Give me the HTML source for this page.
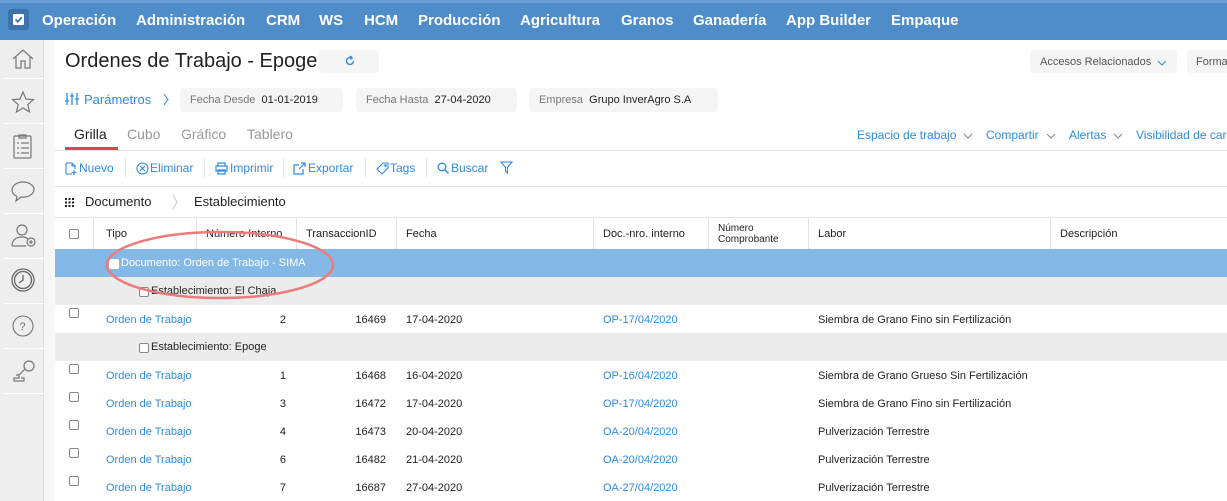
<!DOCTYPE html>
<html><head><meta charset="utf-8"><style>
*{margin:0;padding:0;box-sizing:border-box}
body{width:1227px;height:501px;overflow:hidden;background:#fff;font-family:"Liberation Sans",Arial,sans-serif;position:relative;color:#222}
.abs{position:absolute;white-space:nowrap}
#top{position:absolute;left:0;top:0;width:1227px;height:40px;background:#4f8cca;border-top:3px solid #6a9fd6}
#top .m{position:absolute;top:9px;color:#fff;font-weight:bold;font-size:15px}
#side{position:absolute;left:0;top:40px;width:44px;height:461px;background:#eeeeee;border-right:1px solid #ddd}
#shadow{position:absolute;left:44px;top:40px;width:11px;height:461px;background:linear-gradient(90deg,#f3f3f3,#fafafa)}
.sep{position:absolute;left:4px;width:40px;height:1px;background:#fff}
.t{font-size:11px}
.blue{color:#2f8ae0}
.hl{position:absolute;height:1px;background:#e2e2e2}
.cb{position:absolute;width:10px;height:10px;border:1px solid #888;border-radius:2px;background:#fff}
.col{position:absolute;top:218px;height:31px;width:1px;background:#e3e3e3}
.tb{position:absolute;top:161px;font-size:12px;color:#2f8ae0}
.vs{position:absolute;top:158px;width:1px;height:19px;background:#e2e2e2}
.tb svg{position:absolute;top:1px;left:0}
</style></head><body>
<div id="top">
<div class="abs" style="left:8px;top:6px;width:21px;height:21px;background:#3d72ad;border-radius:3px"></div>
<div class="abs" style="left:13px;top:11px;width:11px;height:11px;background:#fff;border-radius:1px"></div>
<svg class="abs" style="left:13px;top:11px" width="11" height="11"><path d="M2.5 5.5l2.3 2.3L8.8 3.2" stroke="#3d72ad" stroke-width="1.8" fill="none"/></svg>
<span class="m" style="left:42px">Operación</span>
<span class="m" style="left:136px">Administración</span>
<span class="m" style="left:266px">CRM</span>
<span class="m" style="left:319px">WS</span>
<span class="m" style="left:364px">HCM</span>
<span class="m" style="left:418px">Producción</span>
<span class="m" style="left:520px">Agricultura</span>
<span class="m" style="left:621px">Granos</span>
<span class="m" style="left:693px">Ganadería</span>
<span class="m" style="left:786px">App Builder</span>
<span class="m" style="left:891px">Empaque</span>
</div>
<div id="side">
<div class="sep" style="top:38px"></div><div class="sep" style="top:83px"></div><div class="sep" style="top:128px"></div><div class="sep" style="top:173px"></div><div class="sep" style="top:218px"></div><div class="sep" style="top:263px"></div><div class="sep" style="top:308px"></div><div class="sep" style="top:353px"></div>
<svg class="abs" style="left:10px;top:6px" width="26" height="26" fill="none" stroke="#777" stroke-width="1.2"><path d="M3 13L13 4l10 9M6 11v11h5v-7h4v7h5V11"/></svg>
<svg class="abs" style="left:10px;top:49px" width="26" height="26" fill="none" stroke="#777" stroke-width="1.2"><path d="M13 3l3 7 7.5.6-5.7 5 1.8 7.4L13 19l-6.6 4 1.8-7.4-5.7-5L10 10z"/></svg>
<svg class="abs" style="left:12px;top:93px" width="22" height="28" fill="none" stroke="#777" stroke-width="1.2"><rect x="2" y="3" width="17" height="22" rx="1"/><path d="M7 2h7v3H7zM5 10h2M9 10h8M5 15h2M9 15h8M5 20h2M9 20h8"/></svg>
<svg class="abs" style="left:10px;top:138px" width="26" height="26" fill="none" stroke="#777" stroke-width="1.2"><path d="M13 4C7 4 2 7.5 2 12c0 3 2 5 5 6.5L6 23l5-4c.7.1 1.3.1 2 .1 6 0 11-3.5 11-7.6S19 4 13 4z"/></svg>
<svg class="abs" style="left:10px;top:182px" width="28" height="28" fill="none" stroke="#777" stroke-width="1.2"><circle cx="12" cy="8" r="5"/><path d="M2 24c0-6 4-9 10-9 3 0 5 1 6 2M2 24h14"/><circle cx="21" cy="20" r="4"/><path d="M21 18v4M19 20h4"/></svg>
<svg class="abs" style="left:10px;top:227px" width="26" height="26" fill="none" stroke="#666" stroke-width="1.3"><circle cx="13" cy="13" r="11"/><circle cx="13" cy="13" r="8.5"/><path d="M13 8v5l-4 3"/></svg>
<svg class="abs" style="left:11px;top:274px" width="24" height="24" fill="none" stroke="#777" stroke-width="1.1"><circle cx="12" cy="12" r="10"/><text x="8.5" y="16" font-size="11" fill="#777" stroke="none" font-family="Liberation Sans">?</text></svg>
<svg class="abs" style="left:10px;top:318px" width="28" height="26" fill="none" stroke="#777" stroke-width="1.2"><circle cx="19" cy="8" r="5"/><path d="M15 11l-6 6v3H4v3h10v-3h-3M9 17h-3"/></svg>
</div>
<div id="shadow"></div>

<div class="abs" style="left:65px;top:50px;font-size:20px;color:#222">Ordenes de Trabajo - Epoge</div>
<div class="abs" style="left:319px;top:50px;width:60px;height:23px;background:#f5f5f5;border-radius:4px"></div>
<svg class="abs" style="left:344px;top:55px" width="12" height="12" fill="none" stroke="#2f8ae0" stroke-width="1.4"><path d="M9.5 6A3.5 3.5 0 1 1 7 2.6"/><path d="M6 1l2 1.6-1.6 2" /></svg>
<div class="abs" style="left:1030px;top:50px;width:147px;height:23px;background:#f5f5f5;border-radius:4px"></div>
<div class="abs t" style="left:1040px;top:56px;color:#555">Accesos Relacionados</div>
<svg class="abs" style="left:1157px;top:60px" width="10" height="6" fill="none" stroke="#2f8ae0"><path d="M1 1l4 4 4-4"/></svg>
<div class="abs" style="left:1187px;top:50px;width:50px;height:23px;background:#f5f5f5;border-radius:4px"></div>
<div class="abs t" style="left:1196px;top:56px;color:#555">Forma</div>

<svg class="abs" style="left:65px;top:92px" width="14" height="14" stroke="#2f8ae0" stroke-width="1.3"><path d="M2 1v12M7 1v12M12 1v12M0 9h4M5 4h4M10 7h4"/></svg>
<div class="abs" style="left:84px;top:92px;font-size:13px;color:#2f8ae0">Parámetros</div>
<svg class="abs" style="left:163px;top:93px" width="6" height="13" fill="none" stroke="#2f8ae0"><path d="M1 1l4 5.5L1 12"/></svg>
<div class="abs" style="left:180px;top:88px;width:163px;height:24px;background:#f5f5f5;border-radius:4px"></div>
<div class="abs" style="left:190px;top:94px;font-size:11px"><span style="color:#777">Fecha Desde</span>&nbsp; 01-01-2019</div>
<div class="abs" style="left:356px;top:88px;width:161px;height:24px;background:#f5f5f5;border-radius:4px"></div>
<div class="abs" style="left:366px;top:94px;font-size:11px"><span style="color:#777">Fecha Hasta</span>&nbsp; 27-04-2020</div>
<div class="abs" style="left:529px;top:88px;width:189px;height:24px;background:#f5f5f5;border-radius:4px"></div>
<div class="abs" style="left:539px;top:94px;font-size:11px"><span style="color:#777">Empresa</span>&nbsp; Grupo InverAgro S.A</div>

<div class="abs" style="left:74px;top:126px;font-size:14px;color:#222">Grilla</div>
<div class="abs" style="left:127px;top:126px;font-size:14px;color:#999">Cubo</div>
<div class="abs" style="left:181px;top:126px;font-size:14px;color:#999">Gráfico</div>
<div class="abs" style="left:247px;top:126px;font-size:14px;color:#999">Tablero</div>
<div class="abs" style="left:65px;top:147px;width:53px;height:3px;background:#e0493a"></div>
<div class="hl" style="left:55px;top:150px;width:1172px"></div>
<div class="abs" style="left:857px;top:128px;font-size:12px;color:#2f8ae0">Espacio de trabajo</div>
<svg class="abs" style="left:963px;top:133px" width="10" height="6" fill="none" stroke="#888"><path d="M1 1l4 4 4-4"/></svg>
<div class="abs" style="left:986px;top:128px;font-size:12px;color:#2f8ae0">Compartir</div>
<svg class="abs" style="left:1046px;top:133px" width="10" height="6" fill="none" stroke="#888"><path d="M1 1l4 4 4-4"/></svg>
<div class="abs" style="left:1069px;top:128px;font-size:12px;color:#2f8ae0">Alertas</div>
<svg class="abs" style="left:1113px;top:133px" width="10" height="6" fill="none" stroke="#888"><path d="M1 1l4 4 4-4"/></svg>
<div class="abs" style="left:1136px;top:128px;font-size:12px;color:#2f8ae0">Visibilidad de car</div>

<div class="tb" style="left:65px;padding-left:14px"><svg width="12" height="13" fill="none" stroke="#2f8ae0" stroke-width="1.1"><path d="M1 1h6l3 3v3M1 1v11h6M7 1v3h3M9 8v5M6.5 10.5h5"/></svg>Nuevo</div>
<div class="vs" style="left:125px"></div>
<div class="tb" style="left:136px;padding-left:14px"><svg width="13" height="13" fill="none" stroke="#2f8ae0" stroke-width="1.1"><circle cx="6.5" cy="6.5" r="5.5"/><path d="M4 4l5 5M9 4l-5 5"/></svg>Eliminar</div>
<div class="vs" style="left:204px"></div>
<div class="tb" style="left:215px;padding-left:15px"><svg width="13" height="13" fill="none" stroke="#2f8ae0" stroke-width="1.2"><path d="M3 4V1h7v3M1 4h11v5H1zM3 8h7v4H3z"/></svg>Imprimir</div>
<div class="vs" style="left:283px"></div>
<div class="tb" style="left:293px;padding-left:15px"><svg width="13" height="13" fill="none" stroke="#2f8ae0" stroke-width="1.2"><path d="M10 7v5H1V3h5M8 1h4v4M12 1L6 7"/></svg>Exportar</div>
<div class="vs" style="left:365px"></div>
<div class="tb" style="left:376px;padding-left:14px"><svg width="13" height="13" fill="none" stroke="#2f8ae0" stroke-width="1.1"><path d="M7 1h5v5L6 12 1 7z"/><circle cx="9.5" cy="3.5" r=".8"/></svg>Tags</div>
<div class="vs" style="left:426px"></div>
<div class="tb" style="left:437px;padding-left:14px"><svg width="12" height="13" fill="none" stroke="#2f8ae0" stroke-width="1.3"><circle cx="5" cy="5" r="3.8"/><path d="M8 8l3.5 3.5"/></svg>Buscar</div>
<svg class="abs" style="left:500px;top:161px" width="13" height="13" fill="none" stroke="#2f8ae0" stroke-width="1.1"><path d="M1 1h11L7.5 6.5V12L5.5 10.5v-4z"/></svg>
<div class="hl" style="left:55px;top:186px;width:1172px"></div>
<svg class="abs" style="left:65px;top:198px" width="9" height="9" fill="#222"><rect x="0" y="0" width="2" height="2"/><rect x="3.5" y="0" width="2" height="2"/><rect x="7" y="0" width="2" height="2"/><rect x="0" y="3.5" width="2" height="2"/><rect x="3.5" y="3.5" width="2" height="2"/><rect x="7" y="3.5" width="2" height="2"/><rect x="0" y="7" width="2" height="2"/><rect x="3.5" y="7" width="2" height="2"/><rect x="7" y="7" width="2" height="2"/></svg>
<div class="abs" style="left:85px;top:194px;font-size:13px">Documento</div>
<svg class="abs" style="left:172px;top:194px" width="6" height="16" fill="none" stroke="#ccc"><path d="M1 1l4 7-4 7"/></svg>
<div class="abs" style="left:194px;top:194px;font-size:13px">Establecimiento</div>
<div class="hl" style="left:55px;top:217px;width:1172px"></div>

<div class="col" style="left:93px"></div><div class="col" style="left:196px"></div><div class="col" style="left:296px"></div><div class="col" style="left:396px"></div><div class="col" style="left:593px"></div><div class="col" style="left:708px"></div><div class="col" style="left:808px"></div><div class="col" style="left:1050px"></div>
<div class="cb" style="left:69px;top:229px"></div>
<div class="abs t" style="left:106px;top:228px">Tipo</div>
<div class="abs t" style="left:206px;top:228px">Número Interno</div>
<div class="abs t" style="left:306px;top:228px">TransaccionID</div>
<div class="abs t" style="left:406px;top:228px">Fecha</div>
<div class="abs t" style="left:603px;top:228px">Doc.-nro. interno</div>
<div class="abs" style="left:718px;top:223px;font-size:10px;line-height:11px">Número<br>Comprobante</div>
<div class="abs t" style="left:818px;top:228px">Labor</div>
<div class="abs t" style="left:1060px;top:228px">Descripción</div>

<div class="abs" style="left:55px;top:249px;width:1172px;height:28px;background:#84b8e6"></div>
<div class="cb" style="left:109px;top:259px;border-color:#fff"></div>
<div class="abs" style="left:121px;top:257px;font-size:11px;color:#fff">Documento: Orden de Trabajo - SIMA</div>
<div class="abs" style="left:55px;top:277px;width:1172px;height:28px;background:#ececec"></div>
<div class="cb" style="left:139px;top:287px"></div>
<div class="abs t" style="left:151px;top:285px">Establecimiento: El Chaja</div>
<div class="abs" style="left:55px;top:333px;width:1172px;height:28px;background:#ececec"></div>
<div class="cb" style="left:139px;top:343px"></div>
<div class="abs t" style="left:151px;top:341px">Establecimiento: Epoge</div>

<div id="rows"></div>
<script>
var d=[[305,2,16469,"17-04-2020","OP-17/04/2020","Siembra de Grano Fino sin Fertilización"],[361,1,16468,"16-04-2020","OP-16/04/2020","Siembra de Grano Grueso Sin Fertilización"],[389,3,16472,"17-04-2020","OP-17/04/2020","Siembra de Grano Fino sin Fertilización"],[417,4,16473,"20-04-2020","OA-20/04/2020","Pulverización Terrestre"],[445,6,16482,"21-04-2020","OA-20/04/2020","Pulverización Terrestre"],[473,7,16687,"27-04-2020","OA-27/04/2020","Pulverización Terrestre"]];
var h="";d.forEach(function(r){var y=r[0];
h+='<div class="cb" style="left:69px;top:'+(y+3)+'px"></div>';
h+='<div class="abs t blue" style="left:106px;top:'+(y+9)+'px">Orden de Trabajo</div>';
h+='<div class="abs t" style="left:226px;width:60px;text-align:right;top:'+(y+9)+'px">'+r[1]+'</div>';
h+='<div class="abs t" style="left:316px;width:70px;text-align:right;top:'+(y+9)+'px">'+r[2]+'</div>';
h+='<div class="abs t" style="left:406px;top:'+(y+9)+'px">'+r[3]+'</div>';
h+='<div class="abs t blue" style="left:603px;top:'+(y+9)+'px">'+r[4]+'</div>';
h+='<div class="abs t" style="left:818px;top:'+(y+9)+'px">'+r[5]+'</div>';});
document.getElementById("rows").innerHTML=h;
</script>
<svg class="abs" style="left:0;top:0" width="1227" height="501"><ellipse cx="220" cy="265" rx="113" ry="33" fill="none" stroke="#ec7b7b" stroke-width="2.5"/></svg>
</body></html>
